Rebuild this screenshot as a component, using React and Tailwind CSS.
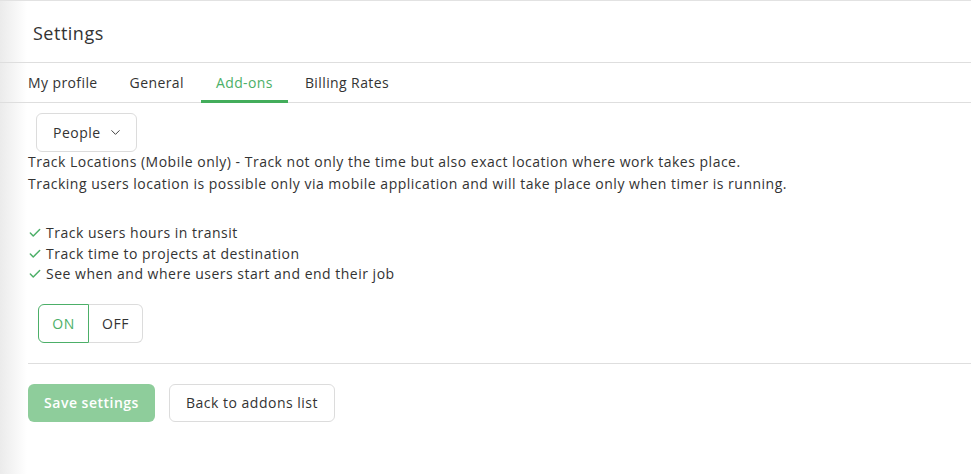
import { Check, ChevronDown } from 'lucide-react';

const TABS = ['My profile', 'General', 'Add-ons', 'Billing Rates'];

const FEATURES = [
  'Track users hours in transit',
  'Track time to projects at destination',
  'See when and where users start and end their job',
];

export default function App() {
  const active = 'Add-ons';

  return (
    <div
      className="w-full h-[474px] bg-[linear-gradient(to_right,#ebebeb,#ffffff_27px)] text-[#333] flex flex-col border-t border-[#e2e2e2] tracking-[0.5px]"
      style={{ fontFamily: '"Open Sans", "Liberation Sans", sans-serif' }}
    >
      {/* Header */}
      <div className="h-[62px] flex items-center pl-[33px] pt-[4px] border-b border-[#dedede]">
        <h1 className="text-[18px] font-medium text-[#333]">Settings</h1>
      </div>

      {/* Tabs */}
      <div className="h-[40px] flex items-stretch pl-[13px] gap-[2px] border-b border-[#dedede] tracking-[0.4px]">
        {TABS.map(t => (
          <div
            key={t}
            className={`px-[15px] pt-[2px] flex items-center text-[14px] border-b-[3px] mb-[-1px] ${
              t === active ? 'border-[#43ad5b] text-[#4caf68]' : 'border-transparent text-[#333]'
            }`}
          >
            {t}
          </div>
        ))}
      </div>

      {/* Content */}
      <div className="pl-[28px] pt-[10px] flex flex-col">
        <div className="pl-[8px]">
          <button className="h-[39px] w-[101px] rounded-md border border-[#dcdcdc] flex items-center pl-[16px] gap-[7px] text-[14px] text-[#333]">
            People
            <ChevronDown size={15} strokeWidth={1.5} />
          </button>
        </div>

        <p className="text-[14px] leading-[22px] mt-[-1px]">
          Track Locations (Mobile only) - Track not only the time but also exact location where work takes place.
          <br />
          Tracking users location is possible only via mobile application and will take place only when timer is running.
        </p>

        <ul className="mt-[28px] flex flex-col">
          {FEATURES.map(f => (
            <li key={f} className="flex items-center gap-[4px] text-[14px] leading-[20.5px]">
              <Check size={14} strokeWidth={2.5} className="text-[#4caf68]" />
              {f}
            </li>
          ))}
        </ul>

        <div className="mt-[19px] pl-[10px] flex">
          <button className="h-[39px] w-[51px] rounded-l-md border border-[#4caf68] text-[14px] text-[#4caf68]">ON</button>
          <button className="h-[39px] w-[54px] rounded-r-md border border-l-0 border-[#dcdcdc] text-[14px] text-[#333]">OFF</button>
        </div>
      </div>

      <div className="ml-[28px] mt-[20px] border-t border-[#dedede]" />

      <div className="pl-[28px] pt-[20px] flex gap-[14px]">
        <button className="h-[38px] w-[127px] rounded-md bg-[#8ecd9b] text-white text-[14px] font-semibold">
          Save settings
        </button>
        <button className="h-[38px] w-[166px] rounded-md border border-[#dcdcdc] bg-white text-[14px] text-[#333]">
          Back to addons list
        </button>
      </div>
    </div>
  );
}
